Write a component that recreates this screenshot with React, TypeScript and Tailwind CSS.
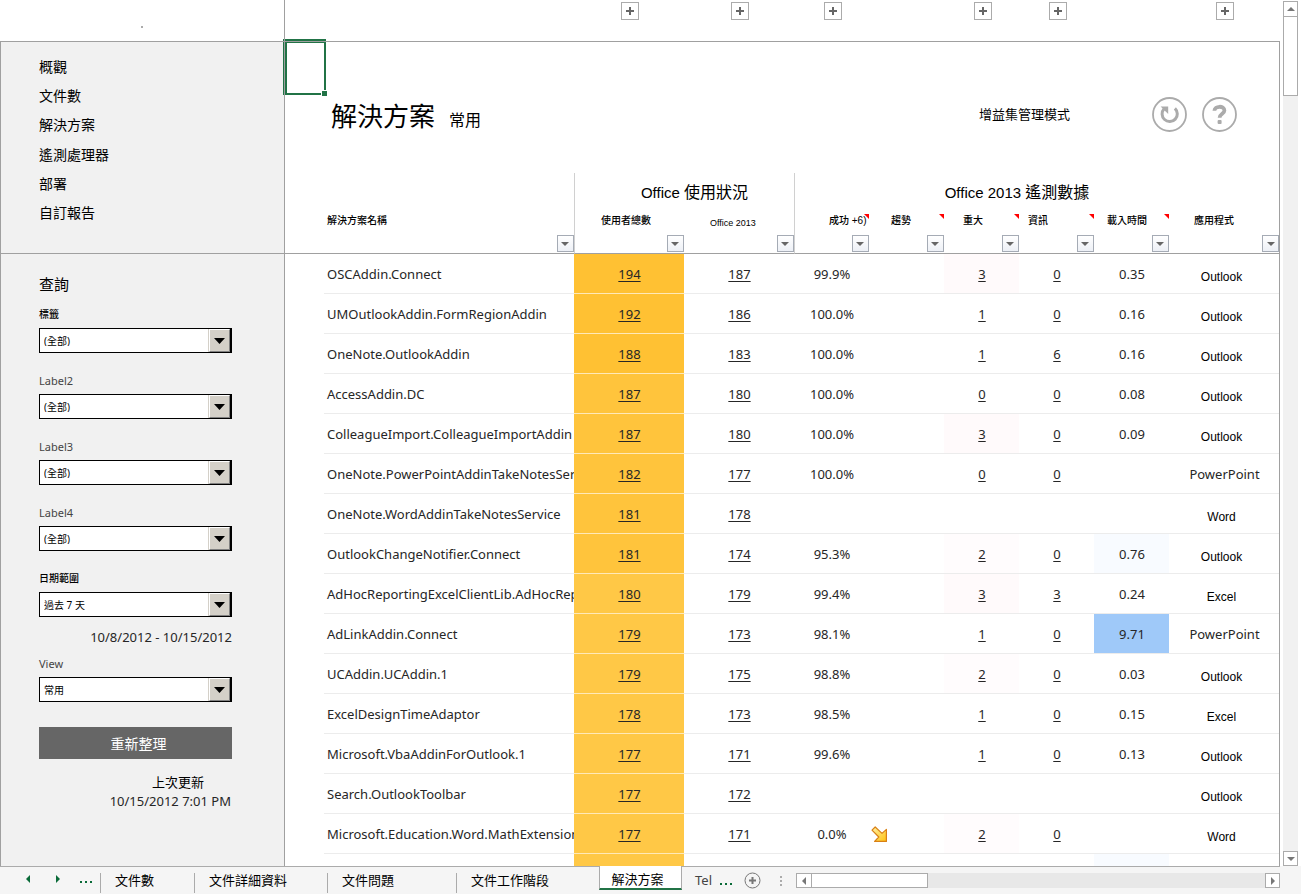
import React from "react";

type Row = {
  name: string;
  total?: number;
  office?: number;
  success?: string;
  trend?: "down";
  critical?: number;
  info?: number;
  load?: string;
  app?: string;
  loadTint?: string;
};

const rows: Row[] = [
  { name: "OSCAddin.Connect", total: 194, office: 187, success: "99.9%", critical: 3, info: 0, load: "0.35", app: "Outlook" },
  { name: "UMOutlookAddin.FormRegionAddin", total: 192, office: 186, success: "100.0%", critical: 1, info: 0, load: "0.16", app: "Outlook" },
  { name: "OneNote.OutlookAddin", total: 188, office: 183, success: "100.0%", critical: 1, info: 6, load: "0.16", app: "Outlook" },
  { name: "AccessAddin.DC", total: 187, office: 180, success: "100.0%", critical: 0, info: 0, load: "0.08", app: "Outlook" },
  { name: "ColleagueImport.ColleagueImportAddin", total: 187, office: 180, success: "100.0%", critical: 3, info: 0, load: "0.09", app: "Outlook" },
  { name: "OneNote.PowerPointAddinTakeNotesService", total: 182, office: 177, success: "100.0%", critical: 0, info: 0, app: "PowerPoint" },
  { name: "OneNote.WordAddinTakeNotesService", total: 181, office: 178, app: "Word" },
  { name: "OutlookChangeNotifier.Connect", total: 181, office: 174, success: "95.3%", critical: 2, info: 0, load: "0.76", app: "Outlook", loadTint: "bg-[#f8fbff]" },
  { name: "AdHocReportingExcelClientLib.AdHocReporting", total: 180, office: 179, success: "99.4%", critical: 3, info: 3, load: "0.24", app: "Excel" },
  { name: "AdLinkAddin.Connect", total: 179, office: 173, success: "98.1%", critical: 1, info: 0, load: "9.71", app: "PowerPoint", loadTint: "bg-[#9fc9f9]" },
  { name: "UCAddin.UCAddin.1", total: 179, office: 175, success: "98.8%", critical: 2, info: 0, load: "0.03", app: "Outlook" },
  { name: "ExcelDesignTimeAdaptor", total: 178, office: 173, success: "98.5%", critical: 1, info: 0, load: "0.15", app: "Excel" },
  { name: "Microsoft.VbaAddinForOutlook.1", total: 177, office: 171, success: "99.6%", critical: 1, info: 0, load: "0.13", app: "Outlook" },
  { name: "Search.OutlookToolbar", total: 177, office: 172, app: "Outlook" },
  { name: "Microsoft.Education.Word.MathExtension", total: 177, office: 171, success: "0.0%", trend: "down", critical: 2, info: 0, app: "Word" },
  { name: "", loadTint: "bg-[#f8fbff]" },
];

const columns = [
  { label: "解決方案名稱", pad: "pl-[3px]", note: false },
  { label: "使用者總數", pad: "pl-[26px]", note: false },
  { label: "Office 2013", pad: "pl-[26px]", note: false },
  { label: "成功 +6)", pad: "pl-[34px]", note: true },
  { label: "趨勢", pad: "pl-[22px]", note: true },
  { label: "重大", pad: "pl-[19px]", note: true },
  { label: "資訊", pad: "pl-[9px]", note: true },
  { label: "載入時間", pad: "pl-[13px]", note: true },
  { label: "應用程式", pad: "pl-[25px]", note: false },
];

const navItems = ["概觀", "文件數", "解決方案", "遙測處理器", "部署", "自訂報告"];

const outlineSlots = [
  { width: "w-[110px]", button: true },
  { width: "w-[110px]", button: true },
  { width: "w-[75px]", button: true },
  { width: "w-[75px]", button: false },
  { width: "w-[75px]", button: true },
  { width: "w-[75px]", button: true },
  { width: "w-[75px]", button: false },
  { width: "w-[110px]", button: true },
];

const tabs = [
  { label: "文件數", width: "w-[94px]" },
  { label: "文件詳細資料", width: "w-[133px]" },
  { label: "文件問題", width: "w-[129px]" },
  { label: "文件工作階段", width: "w-[143px]" },
];

const latin = "font-['Noto_Sans','Noto_Sans_CJK_TC',sans-serif]";
const arial = "font-['Liberation_Sans','Noto_Sans_CJK_TC',sans-serif]";

function Triangle({ dir, className }: { dir: "up" | "down" | "left" | "right"; className: string }) {
  const points = {
    up: "0,4 4,0 8,4",
    down: "0,0 8,0 4,4",
    left: "4,0 4,8 0,4",
    right: "0,0 4,4 0,8",
  }[dir];
  const vertical = dir === "up" || dir === "down";
  return (
    <svg className={className} width={vertical ? 8 : 4} height={vertical ? 4 : 8} viewBox={vertical ? "0 0 8 4" : "0 0 4 8"} aria-hidden="true">
      <polygon points={points} fill="currentColor" />
    </svg>
  );
}

function Field({ id, label, value, strong }: { id: string; label: string; value: string; strong?: boolean }) {
  return (
    <div>
      <label htmlFor={id} className={`block h-4 ${strong ? "text-[10px] leading-4 font-medium text-black" : "text-[11px] leading-[18px] text-[#444]"}`}>
        {label}
      </label>
      <div className="relative mt-1.5">
        <select
          id={id}
          defaultValue={value}
          className="block h-[25px] w-full appearance-none border border-r-2 border-black bg-white pl-1 text-[10px] leading-none text-black outline-none"
        >
          <option>{value}</option>
        </select>
        <span className="pointer-events-none absolute top-px right-0.5 bottom-px flex w-[21px] items-center justify-center border border-t-white border-r-[#808080] border-b-[#808080] border-l-white bg-[#d4d0c8] shadow-[0_1px_0_#000,-1px_0_0_#d4d0c8]">
          <svg width="11" height="6" viewBox="0 0 11 6" aria-hidden="true">
            <polygon points="0,0 11,0 5.5,6" fill="#000" />
          </svg>
        </span>
      </div>
    </div>
  );
}

function FilterButton({ label }: { label: string }) {
  return (
    <button
      type="button"
      aria-label={`${label} 篩選`}
      className="flex h-[17px] w-[17px] items-center justify-center border border-[#a5abb5] bg-linear-to-b from-white to-[#edf0f6] text-[#666]"
    >
      <Triangle dir="down" className="" />
    </button>
  );
}

function Count({ value }: { value?: number }) {
  if (value === undefined) return null;
  return (
    <a href="#details" className="underline decoration-1 underline-offset-2">
      {value}
    </a>
  );
}

function TrendDown() {
  return (
    <svg className="ml-px" width="17" height="17" viewBox="0 0 17 17" role="img" aria-label="下降">
      <defs>
        <linearGradient id="trend" x1="0" y1="0" x2="1" y2="1">
          <stop offset="0" stopColor="#fff2a8" />
          <stop offset="1" stopColor="#ffc20e" />
        </linearGradient>
      </defs>
      <path d="M1 4.2 L4.2 1 L11 7.4 L15.4 3.4 L15.4 15.4 L3.6 15.4 L7.8 11 Z" fill="url(#trend)" stroke="#d98014" strokeWidth="1.2" strokeLinejoin="round" />
    </svg>
  );
}

function Sidebar() {
  return (
    <aside className="flex w-[285px] shrink-0 flex-col border-r border-l border-[#a0a0a0] bg-[#f1f1f1]">
      <nav className="h-[212px] shrink-0 border-b border-[#a0a0a0] pt-2.5 pl-[38px]">
        <ul className="grid h-44 auto-rows-fr items-center text-[14px] leading-5 text-black">
          {navItems.map((item) => (
            <li key={item}>
              <a href="#sheet">{item}</a>
            </li>
          ))}
        </ul>
      </nav>
      <form className="pt-5 pr-[52px] pl-[38px]" onSubmit={(e) => e.preventDefault()}>
        <h2 className="mb-3 text-[15px] leading-5 text-black">查詢</h2>
        <div className="flex flex-col gap-[19px]">
          <Field id="tag" label="標籤" value="(全部)" strong />
          <Field id="label2" label="Label2" value="(全部)" />
          <Field id="label3" label="Label3" value="(全部)" />
          <Field id="label4" label="Label4" value="(全部)" />
          <Field id="range" label="日期範圍" value="過去 7 天" strong />
        </div>
        <p className="mt-2.5 mb-2 text-right text-[13px] leading-5 whitespace-nowrap text-[#262626]">10/8/2012 - 10/15/2012</p>
        <Field id="view" label="View" value="常用" />
        <button type="submit" className="mt-[25px] h-8 w-full bg-[#666] pl-1.5 text-[14px] text-white">
          重新整理
        </button>
        <p className="mt-3.5 pr-7 text-right text-[13px] leading-[18px] text-black">上次更新</p>
        <p className="pr-px text-right text-[13px] leading-5 text-[#262626]">10/15/2012 7:01 PM</p>
      </form>
    </aside>
  );
}

function SheetTitle() {
  return (
    <header className="flex h-[131px] items-center pt-3.5 pr-[42px] pl-[46px] text-black">
      <h1 className="flex items-baseline gap-3.5 pt-1.5 text-[26px] leading-9">
        解決方案 <small className="text-[16px]">常用</small>
      </h1>
      <a href="#mode" className="mr-[82px] ml-auto text-[13px]">
        增益集管理模式
      </a>
      <button type="button" aria-label="重新整理" className="mr-[15px]">
        <svg width="35" height="35" viewBox="0 0 35 35" fill="none">
          <circle cx="17.5" cy="17.5" r="16.5" stroke="#ababab" strokeWidth="1.8" />
          <path d="M22.9 11.4 A7.6 7.6 0 1 1 12.1 11.8" stroke="#ababab" strokeWidth="3" />
          <path d="M8.6 9.6 H16.2 V17 Z" fill="#ababab" />
        </svg>
      </button>
      <button type="button" aria-label="說明">
        <svg width="35" height="35" viewBox="0 0 35 35" fill="none">
          <circle cx="17.5" cy="17.5" r="16.5" stroke="#ababab" strokeWidth="1.8" />
          <path d="M12.4 13.8 C12.6 8.6 22.4 8.4 22.4 13.4 C22.4 16.8 17.6 16.6 17.6 20.8" stroke="#ababab" strokeWidth="3.8" />
          <rect x="15.6" y="23" width="4" height="4" rx="1" fill="#ababab" />
        </svg>
      </button>
    </header>
  );
}

function SolutionsTable() {
  return (
    <table className="w-full table-fixed border-separate border-spacing-0 text-[13px] text-[#262626]">
      <colgroup>
        <col className="w-[39px]" />
        <col />
        <col className="w-[110px]" />
        <col className="w-[110px]" />
        <col className="w-[75px]" />
        <col className="w-[75px]" />
        <col className="w-[75px]" />
        <col className="w-[75px]" />
        <col className="w-[75px]" />
        <col className="w-[110px]" />
      </colgroup>
      <thead className="text-left text-black">
        <tr className={`h-[39px] text-center text-[15px] ${arial}`}>
          <td colSpan={2} />
          <th colSpan={2} className="border-l border-[#d0d0d0] p-0 pl-5 font-normal">
            Office <span className="text-[16px]">使用狀況</span>
          </th>
          <th colSpan={6} className="border-l border-[#d0d0d0] p-0 pr-10 font-normal">
            Office 2013 <span className="text-[16px]">遙測數據</span>
          </th>
        </tr>
        <tr className="h-[42px]">
          <td className="border-b border-[#a0a0a0]" />
          {columns.map((column, i) => (
            <th
              key={column.label}
              className={`relative border-b border-b-[#a0a0a0] p-0 align-bottom text-[10px] font-medium ${arial} ${i === 1 || i === 3 ? "border-l border-l-[#d0d0d0]" : ""}`}
            >
              {column.note && (
                <svg className="absolute top-0.5 right-0" width="5" height="5" viewBox="0 0 5 5" aria-hidden="true">
                  <polygon points="0,0 5,0 5,5" fill="#f00" />
                </svg>
              )}
              <div className={`whitespace-nowrap ${column.pad} ${i === 2 ? "h-4 text-[9px] leading-5" : "leading-4"}`}>{column.label}</div>
              <div className="flex justify-end pt-1.5 pb-px">
                <FilterButton label={column.label} />
              </div>
            </th>
          ))}
        </tr>
      </thead>
      <tbody className="text-center [&_td]:border-b [&_td]:border-[#ececec] [&_td]:p-0 [&_td]:pt-0.5 [&_td]:pl-px">
        {rows.map((row, i) => (
          <tr key={i} className="h-10">
            <td className="border-none!" />
            <td className="overflow-hidden pl-[3px]! text-left whitespace-nowrap">{row.name}</td>
            <td className={`border-[#ffe9b8]! ${i < 3 ? "bg-[#ffc133]" : i < 8 ? "bg-[#ffc43c]" : "bg-[#ffc846]"}`}>
              <Count value={row.total} />
            </td>
            <td>
              <Count value={row.office} />
            </td>
            <td>{row.success}</td>
            <td className="text-left">{row.trend && <TrendDown />}</td>
            <td className={row.critical === 3 ? "bg-[#fffafb]" : row.critical === 2 ? "bg-[#fffcfd]" : ""}>
              <Count value={row.critical} />
            </td>
            <td>
              <Count value={row.info} />
            </td>
            <td className={row.loadTint ?? ""}>{row.load}</td>
            <td className={row.app === "PowerPoint" ? "" : `pt-1.5! pr-1.5! text-[12px] text-black ${arial}`}>{row.app}</td>
          </tr>
        ))}
      </tbody>
    </table>
  );
}

function VerticalScrollbar() {
  return (
    <div className="flex w-[21px] shrink-0 flex-col bg-white pt-px pl-[3px] text-[#777]">
      <button type="button" aria-label="向上捲動" className="flex h-4 w-[15px] items-center justify-center border border-[#ababab] bg-white">
        <Triangle dir="up" className="" />
      </button>
      <div className="flex w-[15px] flex-1 flex-col bg-[#f1f1f1]">
        <div className="-mt-px h-20 border border-[#ababab] bg-white" />
      </div>
      <button type="button" aria-label="向下捲動" className="flex h-[15px] w-[15px] items-center justify-center border border-[#ababab] bg-white">
        <Triangle dir="down" className="" />
      </button>
    </div>
  );
}

function TabBar() {
  return (
    <footer className="flex h-7 shrink-0 bg-[#f5f5f5] text-[13px] text-black">
      <div className="flex w-[100px] shrink-0 items-center border-t border-[#ababab] pb-1 pl-[26px] text-[#0a6b38]">
        <button type="button" aria-label="上一個工作表">
          <Triangle dir="left" className="block" />
        </button>
        <button type="button" aria-label="下一個工作表" className="ml-[26px]">
          <Triangle dir="right" className="block" />
        </button>
        <button type="button" aria-label="更多工作表" className="ml-5 flex gap-[3px] pt-1.5">
          <i className="h-0.5 w-0.5 bg-current" />
          <i className="h-0.5 w-0.5 bg-current" />
          <i className="h-0.5 w-0.5 bg-current" />
        </button>
      </div>
      {tabs.map((tab) => (
        <div key={tab.label} className="shrink-0 border-t border-[#ababab] py-1">
          <button type="button" className={`h-5 border-l border-[#ababab] pb-1 pl-[14px] text-left leading-none whitespace-nowrap ${tab.width}`}>
            {tab.label}
          </button>
        </div>
      ))}
      <button type="button" aria-current="page" className="h-6 w-[83px] shrink-0 border-r border-b-2 border-l border-r-[#ababab] border-b-[#217346] border-l-[#ababab] bg-white pt-1 pr-1.5 leading-none whitespace-nowrap">
        解決方案
      </button>
      <div className="flex min-w-0 flex-1 items-center border-t border-[#ababab] pl-[13px]">
        <button type="button" className="shrink-0 text-[#444]">
          Tel
        </button>
        <button type="button" aria-label="更多工作表" className="ml-2 flex shrink-0 gap-[3px] pt-1.5 text-[#0a6b38]">
          <i className="h-0.5 w-0.5 bg-current" />
          <i className="h-0.5 w-0.5 bg-current" />
          <i className="h-0.5 w-0.5 bg-current" />
        </button>
        <button type="button" aria-label="新增工作表" className="ml-3 shrink-0">
          <svg width="17" height="17" viewBox="0 0 17 17" fill="none" stroke="#777">
            <circle cx="8.5" cy="8.5" r="7.5" />
            <path d="M8.5 5 V12 M5 8.5 H12" strokeWidth="2" />
          </svg>
        </button>
        <span className="ml-[19px] flex shrink-0 flex-col gap-0.5" aria-hidden="true">
          <i className="h-0.5 w-0.5 bg-[#ababab]" />
          <i className="h-0.5 w-0.5 bg-[#ababab]" />
          <i className="h-0.5 w-0.5 bg-[#ababab]" />
        </span>
        <div className="ml-[14px] flex h-[15px] min-w-0 flex-1 bg-[#e8e8e8] text-[#777]">
          <button type="button" aria-label="向左捲動" className="flex w-4 shrink-0 items-center justify-center border border-[#ababab] bg-white">
            <Triangle dir="left" className="" />
          </button>
          <div className="-ml-px w-[117px] border border-[#ababab] bg-white" />
          <button type="button" aria-label="向右捲動" className="ml-auto flex w-[15px] shrink-0 items-center justify-center border border-[#ababab] bg-white">
            <Triangle dir="right" className="" />
          </button>
        </div>
      </div>
      <div className="w-[21px] shrink-0" />
    </footer>
  );
}

export default function App() {
  return (
    <div className={`flex h-screen flex-col overflow-hidden bg-white ${latin}`}>
      <div className="flex min-h-0 flex-1">
        <div className="flex min-w-0 flex-1 flex-col">
          <div className="flex h-[42px] shrink-0 border-b border-[#a0a0a0]">
            <div className="flex w-[285px] shrink-0 justify-center border-r border-[#a0a0a0] pt-[26px]">
              <i className="h-0.5 w-0.5 bg-[#ababab]" />
            </div>
            <div className="flex flex-1 justify-end pt-0.5">
              {outlineSlots.map((slot, i) => (
                <div key={i} className={`flex shrink-0 justify-center ${slot.width}`}>
                  {slot.button && (
                    <button type="button" aria-label="展開群組" className="flex h-[18px] w-[18px] items-center justify-center border border-[#ababab] bg-white">
                      <svg width="8" height="8" viewBox="0 0 8 8" stroke="#666" strokeWidth="2" aria-hidden="true">
                        <path d="M4 0 V8 M0 4 H8" />
                      </svg>
                    </button>
                  )}
                </div>
              ))}
            </div>
          </div>
          <div className="flex min-h-0 flex-1">
            <Sidebar />
            <main className="relative min-w-0 flex-1 border-r border-[#a0a0a0]">
              <div className="h-full overflow-hidden">
                <SheetTitle />
                <SolutionsTable />
              </div>
              <div className="pointer-events-none absolute -top-[3px] -left-0.5 h-14 w-[43px] border-t-4 border-r-2 border-b-2 border-l-4 border-[#217346]">
                <i className="absolute -top-0.5 -right-0.5 -left-1 h-px bg-[#a0a0a0]" />
                <i className="absolute -top-1 -bottom-0.5 -left-[3px] w-px bg-[#a0a0a0]" />
                <i className="absolute -right-1 -bottom-1 h-[7px] w-[7px] border border-white bg-[#217346]" />
              </div>
            </main>
          </div>
        </div>
        <VerticalScrollbar />
      </div>
      <TabBar />
    </div>
  );
}
